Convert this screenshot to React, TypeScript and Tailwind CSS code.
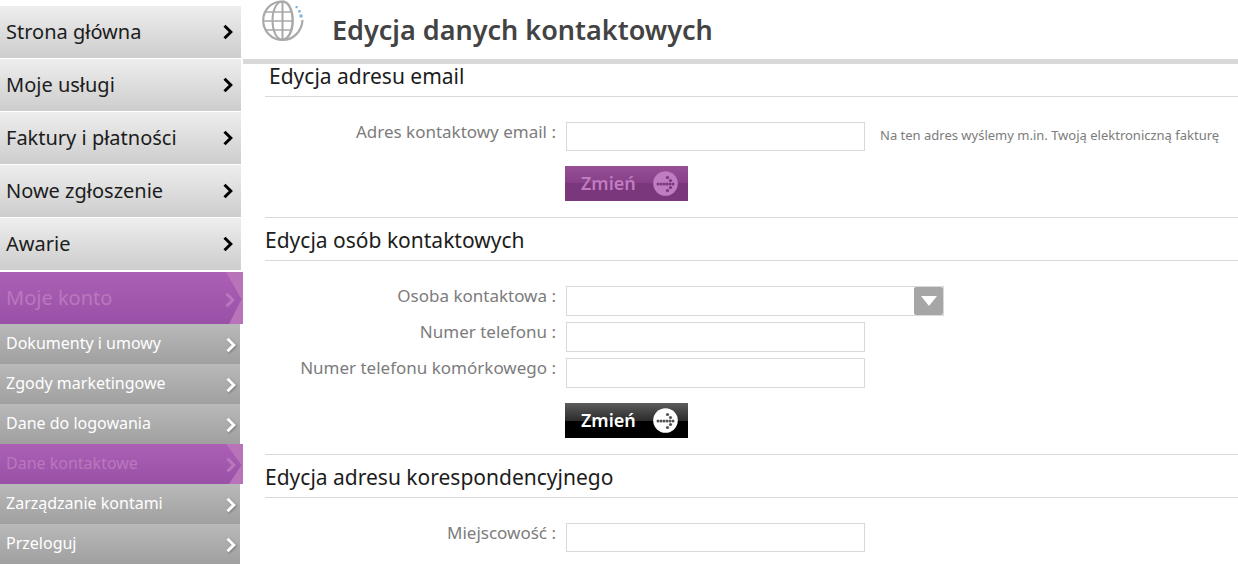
import React from "react";

type MenuItem = {
  label: string;
  active?: boolean;
};

const mainMenu: MenuItem[] = [
  { label: "Strona główna" },
  { label: "Moje usługi" },
  { label: "Faktury i płatności" },
  { label: "Nowe zgłoszenie" },
  { label: "Awarie" },
];

const subMenu: MenuItem[] = [
  { label: "Dokumenty i umowy" },
  { label: "Zgody marketingowe" },
  { label: "Dane do logowania" },
  { label: "Dane kontaktowe", active: true },
  { label: "Zarządzanie kontami" },
  { label: "Przeloguj" },
];

const Chevron = ({ className }: { className: string }) => (
  <svg viewBox="0 0 10 16" fill="none" stroke="currentColor" strokeWidth="3" className={className} aria-hidden="true">
    <path d="M1.5 1.8 7.8 8 1.5 14.2" />
  </svg>
);

// purple bar with the arrow-shaped right end
const ActiveShape = () => (
  <svg viewBox="0 0 18 40" preserveAspectRatio="none" className="absolute top-0 right-0 h-full w-[18px]" aria-hidden="true">
    <path d="M1 0H18V40H4L16.5 21Z" fill="#b973b9" />
  </svg>
);

const Globe = () => (
  <svg viewBox="0 0 42 42" fill="none" stroke="#a9a9a9" className="h-[42px] w-[42px]" aria-hidden="true">
    <path d="M20.5 1.5C9 1.5 1.2 10 1.2 20.5S9.5 40 20.5 40 40 31 40.5 20" strokeWidth="2.2" />
    <path d="M20.5 1.5C27 1.5 30.7 11 30.7 20.5S27 39.5 20.5 39.5" strokeWidth="2.4" />
    <path d="M20.5 1.5C14 1.5 10.5 11 10.5 20.5S14 39.5 20.5 39.5" strokeWidth="2" />
    <path d="M20.5 1V40" strokeWidth="2" />
    <path d="M4 12H30M1.5 21H31M4 30H30" strokeWidth="1.5" />
    <g fill="#7db4dc" stroke="none">
      <rect x="33.5" y="6" width="2.2" height="2.2" />
      <rect x="36.2" y="10" width="2.5" height="2.5" />
      <rect x="37.5" y="14.5" width="3" height="3" />
    </g>
  </svg>
);

const DottedArrow = ({ dots }: { dots: string }) => (
  <svg viewBox="0 0 25 25" className="h-[25px] w-[25px]" aria-hidden="true">
    <circle cx="12.5" cy="12.5" r="12.3" fill="currentColor" />
    <g fill={dots}>
      <circle cx="5" cy="13" r="1.5" />
      <circle cx="8" cy="13" r="1.5" />
      <circle cx="11" cy="13" r="1.5" />
      <circle cx="14" cy="13" r="1.5" />
      <circle cx="17" cy="13" r="1.5" />
      <circle cx="20" cy="13" r="1.5" />
      <circle cx="17.5" cy="9.5" r="1.6" />
      <circle cx="14.5" cy="6.5" r="1.6" />
      <circle cx="17.5" cy="16.5" r="1.6" />
      <circle cx="14.5" cy="19.5" r="1.6" />
    </g>
  </svg>
);

const SubmitButton = ({ highlighted }: { highlighted?: boolean }) => (
  <button
    type="submit"
    className={
      "mt-[15px] ml-[300px] flex h-[35px] w-[123px] items-center justify-between pr-2.5 pl-4 text-lg leading-6 font-semibold " +
      (highlighted
        ? "bg-[linear-gradient(#965094,#873f88_50%,#7b377b_50%)] text-[#c07cc0]"
        : "bg-[linear-gradient(#5c5c5c,#2c2c2c_50%,#000_50%)] text-white")
    }
  >
    <span className="pb-0.5">Zmień</span>
    <DottedArrow dots={highlighted ? "#7b377b" : "#555"} />
  </button>
);

type FieldProps = {
  id: string;
  label: string;
  children: React.ReactNode;
};

const Field = ({ id, label, children }: FieldProps) => (
  <div className="flex items-start gap-2.5">
    <label htmlFor={id} className="w-[291px] shrink-0 text-right text-[17px] leading-5 text-[#7c7c7c]">
      {label} :
    </label>
    {children}
  </div>
);

const inputClass = "w-[299px] shrink-0 border border-[#d9d9d9] bg-white px-2 text-sm text-[#555] outline-none";

const Sidebar = () => (
  <nav className="w-[243px] shrink-0 pt-1.5">
    <ul className="flex flex-col gap-px">
      {mainMenu.map((item) => (
        <li key={item.label} className="w-[241px]">
          <a href="#" className="flex h-[52px] items-center justify-between bg-linear-to-b from-[#eeeeee] to-[#cdcdcd] pr-2 pl-1.5 text-xl text-[#1c1c1c]">
            {item.label}
            <Chevron className="h-4 w-2.5 text-black" />
          </a>
        </li>
      ))}
    </ul>
    <a href="#" className="relative mt-0.5 flex h-[52px] items-center justify-between bg-linear-to-b from-[#ab60b5] to-[#9950a6] pr-2 pl-1.5 text-xl text-[#bb77bd]">
      <ActiveShape />
      Moje konto
      <Chevron className="relative mt-1 h-4 w-2.5" />
    </a>
    <ul>
      {subMenu.map((item) => (
        <li key={item.label}>
          {item.active ? (
            <a href="#" className="relative flex h-10 items-center justify-between bg-linear-to-b from-[#ab60b5] to-[#9950a6] pr-[7px] pb-0.5 pl-1.5 text-base text-[#bb77bd]">
              <ActiveShape />
              {item.label}
              <Chevron className="relative mt-1 h-4 w-2.5" />
            </a>
          ) : (
            <a href="#" className="flex h-10 w-[240px] items-center justify-between bg-linear-to-b from-[#b9b9b9] to-[#a0a0a0] pr-1 pb-0.5 pl-1.5 text-base text-white">
              {item.label}
              <Chevron className="mt-1 h-4 w-2.5 drop-shadow-[1px_1px_1px_#777]" />
            </a>
          )}
        </li>
      ))}
    </ul>
  </nav>
);

const headingClass = "flex h-[43px] items-center border-b border-[#d9d9d9] pt-0.5 text-[21px] leading-6 text-[#1c1c1c]";

export default function App() {
  return (
    <div className="flex bg-white font-['Noto_Sans','Open_Sans',sans-serif]">
      <Sidebar />
      <main className="min-w-0 flex-1">
        <header className="flex h-16 items-start gap-7 border-b-[5px] border-[#d9d9d9] pl-[19px]">
          <Globe />
          <h1 className="pt-3 text-[27px] leading-9 font-semibold text-[#434343]">Edycja danych kontaktowych</h1>
        </header>
        <div className="pl-[22px]">
          <form onSubmit={(e) => e.preventDefault()} className="border-b border-[#d9d9d9] pb-4">
            <h2 className="flex h-[33px] items-start border-b border-[#d9d9d9] pl-1 text-[21px] leading-6 text-[#1c1c1c]">Edycja adresu email</h2>
            <div className="pt-[25px]">
              <Field id="email" label="Adres kontaktowy email">
                <input id="email" type="email" className={inputClass + " h-[29px]"} />
                <p className="ml-[5px] text-[13px] leading-[26px] whitespace-nowrap text-[#7c7c7c]">
                  Na ten adres wyślemy m.in. Twoją elektroniczną fakturę
                </p>
              </Field>
            </div>
            <SubmitButton highlighted />
          </form>

          <form onSubmit={(e) => e.preventDefault()} className="border-b border-[#d9d9d9] pb-4">
            <h2 className={headingClass}>Edycja osób kontaktowych</h2>
            <div className="flex flex-col gap-1.5 pt-[25px]">
              <Field id="person" label="Osoba kontaktowa">
                <div className="relative">
                  <select id="person" className="block h-[30px] w-[378px] appearance-none border border-[#d9d9d9] bg-white pr-8 pl-2 text-sm text-[#555] outline-none">
                    <option value=""></option>
                  </select>
                  <span className="pointer-events-none absolute top-px right-px flex h-7 w-[29px] items-center justify-center rounded-xs bg-[#a6a6a6]">
                    <svg viewBox="0 0 16 10" className="h-2.5 w-4" aria-hidden="true">
                      <path d="M0 0H16L8 10Z" fill="#fff" />
                    </svg>
                  </span>
                </div>
              </Field>
              <Field id="phone" label="Numer telefonu">
                <input id="phone" type="tel" className={inputClass + " h-[30px]"} />
              </Field>
              <Field id="mobile" label="Numer telefonu komórkowego">
                <input id="mobile" type="tel" className={inputClass + " h-[30px]"} />
              </Field>
            </div>
            <SubmitButton />
          </form>

          <form onSubmit={(e) => e.preventDefault()}>
            <h2 className={headingClass}>Edycja adresu korespondencyjnego</h2>
            <div className="pt-[25px]">
              <Field id="city" label="Miejscowość">
                <input id="city" type="text" className={inputClass + " h-[29px]"} />
              </Field>
            </div>
          </form>
        </div>
      </main>
    </div>
  );
}
